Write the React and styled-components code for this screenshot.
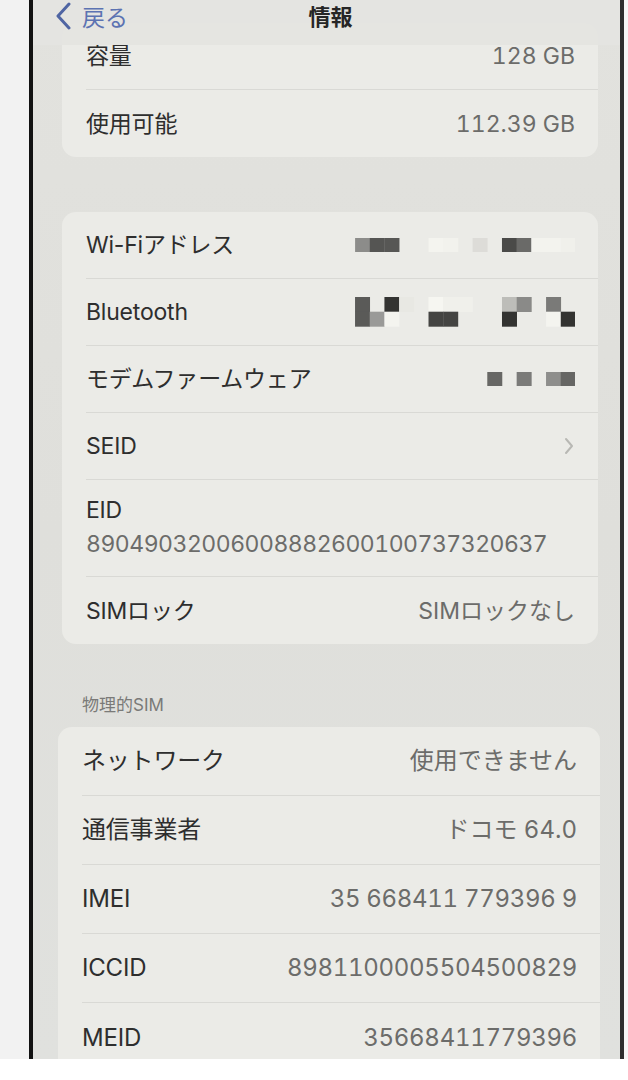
import React from "react";
import styled, { createGlobalStyle } from "styled-components";

const GlobalStyle = createGlobalStyle`
  html, body {
    margin: 0;
    padding: 0;
    background: #ffffff;
  }
  body {
    font-family: "Inter", "Noto Sans CJK JP", sans-serif;
  }
`;

const Page = styled.div`
  width: 628px;
  height: 1080px;
  display: flex;
  flex-direction: column;
  background: #ffffff;
  overflow: hidden;
`;

const Stage = styled.div`
  height: 1059px;
  display: flex;
`;

const Gutter = styled.div`
  width: ${(p) => p.w}px;
  background: ${(p) => p.bg};
`;

const Phone = styled.div`
  position: relative;
  flex: 1;
  border-left: 4px solid #121212;
  border-right: 4px solid #2e2e2e;
  background: linear-gradient(180deg, #e2e2de 0%, #dfdfdb 50%, #e0e1de 100%);
  overflow: hidden;
`;

const NavBar = styled.div`
  position: absolute;
  top: 0;
  left: 0;
  right: 0;
  height: 45px;
  display: grid;
  grid-template-columns: 1fr auto 1fr;
  align-items: center;
  background: rgba(228, 228, 225, 0.96);
  z-index: 2;
`;

const Back = styled.div`
  display: flex;
  align-items: center;
  gap: 10px;
  padding-left: 21px;
  color: #5c73b2;
  font-size: 23px;
  font-family: "Noto Sans CJK JP", sans-serif;
  margin-top: -14px;
`;

const Title = styled.div`
  font-family: "Noto Sans CJK JP", sans-serif;
  font-weight: 700;
  font-size: 22px;
  color: #262626;
  margin-top: -16px;
  margin-left: 8px;
`;

const Content = styled.div`
  padding: 23px 22px 0 29px;
  display: flex;
  flex-direction: column;
`;

const Card = styled.div`
  background: #ebebe7;
  border-radius: 14px;
  margin: ${(p) => (p.wide ? "0 -2px 0 -4px" : "0")};
  overflow: hidden;
`;

const Gap = styled.div`
  height: ${(p) => p.h}px;
`;

const SectionHeader = styled.div`
  padding: 51px 0 12px 20px;
  line-height: 20px;
  font-size: 17px;
  color: #7a7a78;
  font-family: "Inter", "Noto Sans CJK JP", sans-serif;
`;

const Row = styled.div`
  padding-left: 24px;
  &:last-child > div {
    border-bottom: none;
  }
`;

const RowInner = styled.div`
  height: ${(p) => p.h}px;
  box-sizing: border-box;
  padding-right: 23px;
  display: flex;
  align-items: center;
  justify-content: space-between;
  border-bottom: 1px solid #d9d9d5;
`;

const StackInner = styled.div`
  height: ${(p) => p.h}px;
  box-sizing: border-box;
  padding-top: 14px;
  display: flex;
  flex-direction: column;
  gap: 2px;
  border-bottom: 1px solid #d9d9d5;
`;

const Label = styled.span`
  font-size: ${(p) => p.size || 23}px;
  color: #2e2e2e;
  line-height: 32px;
  letter-spacing: -0.2px;
`;

const Value = styled.span`
  font-size: ${(p) => p.size || 23}px;
  color: #6c6c6a;
  line-height: 32px;
  font-variant-numeric: tabular-nums;
  letter-spacing: ${(p) => p.ls || 0}px;
`;

const Chevron = () => (
  <svg width="12" height="18" viewBox="0 0 12 18">
    <polyline points="3,2 9,9 3,16" fill="none" stroke="#b8b8b4" strokeWidth="2" strokeLinecap="round" strokeLinejoin="round" />
  </svg>
);

const BackChevron = () => (
  <svg width="18" height="28" viewBox="0 0 18 28">
    <polyline points="15,2 4,14 15,26" fill="none" stroke="#4f65a3" strokeWidth="3" strokeLinecap="round" strokeLinejoin="round" />
  </svg>
);

const CELL = 14.7;

const Mosaic = ({ cells, rows }) => (
  <svg width={CELL * 15} height={CELL * rows} viewBox={`0 0 ${CELL * 15} ${CELL * rows}`}>
    {cells.map(([c, r, fill], i) => (
      <rect key={i} x={c * CELL} y={r * CELL} width={CELL + 0.3} height={CELL + 0.3} fill={fill} />
    ))}
  </svg>
);

const wifiCells = [
  [0, 0, "#8c8c8a"], [1, 0, "#555553"], [2, 0, "#575755"],
  [5, 0, "#f4f4ef"], [6, 0, "#f2f2ed"], [8, 0, "#dddcd8"],
  [10, 0, "#4a4a48"], [11, 0, "#6a6a68"], [12, 0, "#f3f3ee"], [13, 0, "#f3f3ee"], [14, 0, "#f0f0eb"],
];

const btCells = [
  [0, 0, "#5a5a58"], [2, 0, "#333331"], [3, 0, "#e8e8e3"],
  [5, 0, "#f6f6f1"], [6, 0, "#f0f0eb"], [7, 0, "#f0f0eb"],
  [10, 0, "#bdbdb9"], [11, 0, "#8a8a88"], [13, 0, "#7a7a78"],
  [0, 1, "#5a5a58"], [1, 1, "#9a9a98"], [2, 1, "#f4f4ef"],
  [5, 1, "#444442"], [6, 1, "#444442"],
  [10, 1, "#333331"], [13, 1, "#f4f4ef"], [14, 1, "#333331"],
];

const modemCells = [
  [9, 0, "#676765"], [11, 0, "#7b7b79"], [13, 0, "#8e8e8c"], [14, 0, "#666664"],
];

const Line = ({ label, value, h = 67, size, ls }) => (
  <Row>
    <RowInner h={h}>
      <Label size={size}>{label}</Label>
      {typeof value === "string" ? (
        <Value size={size} ls={ls}>{value}</Value>
      ) : (
        value
      )}
    </RowInner>
  </Row>
);

export default function App() {
  return (
    <>
      <GlobalStyle />
      <Page>
        <Stage>
          <Gutter w={29} bg="#f2f2f2" />
          <Phone>
            <NavBar>
              <Back>
                <BackChevron />
                <span>戻る</span>
              </Back>
              <Title>情報</Title>
              <div />
            </NavBar>
            <Content>
              <Card>
                <Line label="容量" value="128 GB" />
                <Line label="使用可能" value="112.39 GB" />
              </Card>
              <Gap h={55} />
              <Card>
                <Line label="Wi-Fiアドレス" value={<Mosaic cells={wifiCells} rows={1} />} />
                <Line label="Bluetooth" value={<Mosaic cells={btCells} rows={2} />} />
                <Line label="モデムファームウェア" value={<Mosaic cells={modemCells} rows={1} />} />
                <Line label="SEID" value={<Chevron />} />
                <Row>
                  <StackInner h={97}>
                    <Label>EID</Label>
                    <Value ls={-0.5}>89049032006008882600100737320637</Value>
                  </StackInner>
                </Row>
                <Line label="SIMロック" value="SIMロックなし" />
              </Card>
              <SectionHeader>物理的SIM</SectionHeader>
              <Card wide>
                <Line label="ネットワーク" value="使用できません" h={69} size={24} />
                <Line label="通信事業者" value="ドコモ 64.0" h={69} size={24} />
                <Line label="IMEI" value="35 668411 779396 9" h={69} size={24} ls={-0.3} />
                <Line label="ICCID" value="8981100005504500829" h={69} size={24} ls={-0.3} />
                <Line label="MEID" value="35668411779396" h={69} size={24} ls={-0.3} />
              </Card>
            </Content>
          </Phone>
          <Gutter w={4} bg="#f6f6f6" />
        </Stage>
      </Page>
    </>
  );
}
